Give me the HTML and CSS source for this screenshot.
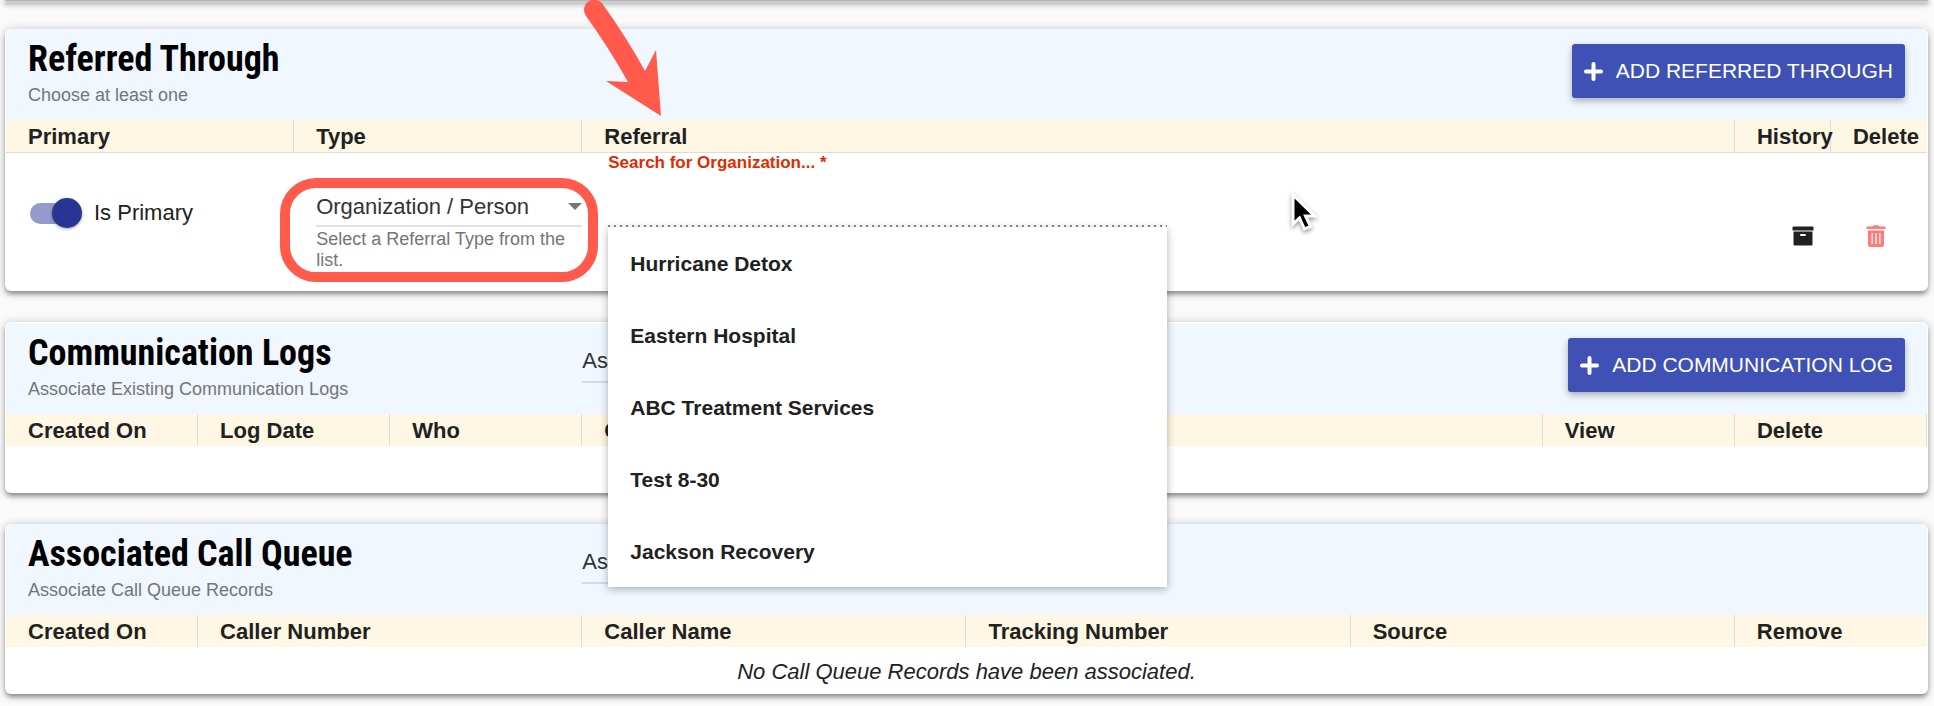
FILE: index.html
```html
<!DOCTYPE html>
<html lang="en">
<head>
  <meta charset="UTF-8" />
  <meta name="viewport" content="width=device-width, initial-scale=1" />
  <title>Referrals</title>
  <link rel="stylesheet" href="styles.css">
</head>
<body>
  <section class="card collapsed"></section>

  <section class="card">
    <header class="card-header">
      <div>
        <h2>Referred Through</h2>
        <p>Choose at least one</p>
      </div>
      <button type="button" class="add">
        <svg width="19" height="19" viewBox="0 0 19 19"><path d="M9.500 2v15M2 9.500h15" stroke="#fff" stroke-width="4" stroke-linecap="round" /></svg>
        ADD REFERRED THROUGH
      </button>
    </header>
    <table class="lined">
      <thead>
        <tr>
          <th class="w15">Primary</th>
          <th class="w15">Type</th>
          <th class="referral">Referral
            <svg class="arrow" width="84" height="118" viewBox="0 0 84 118"><path fill="#ff5a4b" d="M4 16C-2 7 7-4 17 1Q20 2 22 6Q45 38 63 71L74 50L79 116L24 81L46 82Q27 48 4 16Z" /></svg>
          </th>
          <th class="w5">History</th>
          <th class="w5">Delete</th>
        </tr>
      </thead>
      <tbody>
        <tr class="entry">
          <td class="primary">
            <label class="switch"><input type="checkbox" role="switch" checked><span class="track"></span>Is Primary</label>
          </td>
          <td class="type">
            <div class="select">
              <select aria-label="Referral Type" aria-describedby="type-hint">
                <option>Organization / Person</option>
              </select>
            </div>
            <p class="hint" id="type-hint">Select a Referral Type from the list.</p>
            <div class="highlight"></div>
          </td>
          <td class="search">
            <div class="autocomplete">
              <label for="organization">Search for Organization... *</label>
              <input type="text" id="organization">
              <ul class="options">
                <li>Hurricane Detox</li>
                <li>Eastern Hospital</li>
                <li>ABC Treatment Services</li>
                <li>Test 8-30</li>
                <li>Jackson Recovery</li>
              </ul>
            </div>
          </td>
          <td class="history">
            <button type="button" class="icon" aria-label="History">
              <svg width="22" height="20" viewBox="0 0 22 20" fill="#212121"><path d="M1.500.5h19a1 1 0 0 1 1 1V4.500H.5v-3a1 1 0 0 1 1-1z" /><path fill-rule="evenodd" d="M1.500 5.500h19v13a1 1 0 0 1-1 1h-17a1 1 0 0 1-1-1zM9 8a.7.7 0 0 0 0 2h4a.7.7 0 0 0 0-2z" /></svg>
            </button>
          </td>
          <td class="delete">
            <button type="button" class="icon" aria-label="Delete">
              <svg width="20" height="22" viewBox="0 0 20 22" fill="#ff7b7b"><path d="M1 1.500h5.500L7.500.3h5l1 1.200H19a.5.5 0 0 1 .5.500V4H.5V2a.5.5 0 0 1 .5-.5z" /><path fill-rule="evenodd" d="M2 5.500h16V20a2 2 0 0 1-2 2H4a2 2 0 0 1-2-2zM5.500 8v11h1.300V8zM9.400 8v11h1.300V8zM13.200 8v11h1.300V8z" /></svg>
            </button>
          </td>
        </tr>
      </tbody>
    </table>
  </section>

  <section class="card edged">
    <header class="card-header">
      <div>
        <h2>Communication Logs</h2>
        <p>Associate Existing Communication Logs</p>
      </div>
      <div class="select associate">
        <select aria-label="Associate Communication Log">
          <option>Associate Communication Log</option>
        </select>
      </div>
      <button type="button" class="add">
        <svg width="19" height="19" viewBox="0 0 19 19"><path d="M9.500 2v15M2 9.500h15" stroke="#fff" stroke-width="4" stroke-linecap="round" /></svg>
        ADD COMMUNICATION LOG
      </button>
    </header>
    <table class="closed">
      <thead>
        <tr>
          <th class="w10">Created On</th>
          <th class="w10">Log Date</th>
          <th class="w10">Who</th>
          <th>Comments</th>
          <th class="w10">View</th>
          <th class="w10">Delete</th>
        </tr>
      </thead>
      <tbody>
        <tr><td colspan="6" class="empty"></td></tr>
      </tbody>
    </table>
  </section>

  <section class="card">
    <header class="card-header">
      <div>
        <h2>Associated Call Queue</h2>
        <p>Associate Call Queue Records</p>
      </div>
      <div class="select associate">
        <select aria-label="Associate Call Queue Record">
          <option>Associate Call Queue Record</option>
        </select>
      </div>
    </header>
    <table>
      <thead>
        <tr>
          <th class="w10">Created On</th>
          <th class="w20">Caller Number</th>
          <th class="w20">Caller Name</th>
          <th class="w20">Tracking Number</th>
          <th class="w20">Source</th>
          <th class="w10">Remove</th>
        </tr>
      </thead>
      <tbody>
        <tr><td colspan="6" class="empty">No Call Queue Records have been associated.</td></tr>
      </tbody>
    </table>
  </section>

  <svg class="pointer" width="30" height="42" viewBox="0 0 30 42"><path d="M3 3V32L9.500 26L14.500 37L20.500 34.500L15.500 24H24.500Z" fill="#000" stroke="#fff" stroke-width="3" /></svg>
</body>
</html>
```

FILE: styles.css
```css
* {
  box-sizing: border-box;
}
body {
  position: relative;
  margin: 0;
  padding: 0 6px 12px 5px;
  background: #fafafa;
  color: #212121;
  font-family: "Liberation Sans", Arial, sans-serif;
  font-size: 22px;
}
h2, p, ul {
  margin: 0;
  padding: 0;
}

/* cards */
.card {
  margin-bottom: 31px;
  padding: 0 1px;
  background: #fff;
  border-radius: 6px;
  box-shadow: 0 1px 10px rgba(0,0,0,0.24), 0 4px 5px rgba(0,0,0,0.16), 0 4px 4px -2px rgba(0,0,0,0.24);
}
.card:last-of-type {
  margin-bottom: 0;
}
/* only the lower edge of this one shows */
.collapsed {
  height: 1px;
  margin-bottom: 28px;
  border-radius: 0;
  background: #b4b4b4;
  box-shadow: 0 0 10px rgba(0,0,0,0.3), 0 2px 5px 1px rgba(0,0,0,0.4);
}
.edged {
  padding-top: 1px;
}
.card-header {
  display: grid;
  grid-template-columns: 30% 1fr auto;
  align-items: start;
  height: 91px;
  background: #f0f7ff;
  border-radius: 6px 6px 0 0;
}
.card-header > div:first-child {
  padding: 10px 0 0 22px;
}
h2 {
  color: #000;
  font-family: "Roboto Condensed", Roboto, sans-serif;
  font-size: 36px;
  line-height: 40px;
  white-space: nowrap;
}
.card-header p {
  color: #757575;
  font-size: 18px;
  line-height: 32px;
}
.add {
  display: flex;
  grid-column: 3;
  align-items: center;
  gap: 13px;
  height: 54px;
  margin: 15px 22px 0 0;
  padding: 0 12px;
  border: 0;
  border-radius: 3px;
  background: #3f51b5;
  color: #fff;
  font: 21px "Liberation Sans", Arial, sans-serif;
  box-shadow: 0 3px 7px rgba(0,0,0,0.3);
}

/* tables */
table {
  width: 100%;
  table-layout: fixed;
  border-collapse: separate;
  border-spacing: 0;
}
th {
  height: 32px;
  padding: 2px 0 0 22px;
  border-right: 1px solid #dcdcdc;
  background: #fdf7e3;
  line-height: 30px;
  text-align: left;
  white-space: nowrap;
}
th:last-child {
  border-right: 0;
}
.closed th:last-child {
  border-right: 1px solid #dcdcdc;
}
.lined th {
  height: 33px;
  border-bottom: 1px solid #dcdcdc;
}
.w5 { width: 5%; }
.w10 { width: 10%; }
.w15 { width: 15%; }
.w20 { width: 20%; }
td {
  padding: 0;
}
.entry td {
  position: relative;
  height: 138px;
  vertical-align: top;
}
.empty {
  height: 47px;
  padding-top: 2px;
  font-style: italic;
  text-align: center;
}

/* is primary switch */
.entry .primary {
  padding: 45px 0 0 24px;
}
.switch {
  display: flex;
  align-items: center;
  height: 30px;
}
.switch input {
  position: absolute;
  opacity: 0;
}
.track {
  position: relative;
  width: 44px;
  height: 21px;
  margin-right: 20px;
  border-radius: 11px;
  background: #949aca;
}
.track::after {
  content: "";
  position: absolute;
  top: -5px;
  right: -8px;
  width: 30px;
  height: 30px;
  border-radius: 50%;
  background: #283593;
  box-shadow: 0 1px 3px rgba(0,0,0,0.4);
}

/* selects */
.entry .type {
  padding: 36px 0 0 22px;
}
.select {
  position: relative;
  border-bottom: 2px solid #e1e1e1;
}
.select::after {
  content: "";
  position: absolute;
  top: 14px;
  right: 0;
  border: 7px solid transparent;
  border-top-color: #757575;
  border-bottom-width: 0;
}
.select select {
  display: block;
  width: 100%;
  height: 36px;
  padding: 0 0 2px;
  border: 0;
  appearance: none;
  background: none;
  color: #333;
  font: 22px "Liberation Sans", Arial, sans-serif;
}
.associate {
  width: 400px;
  margin-top: 22px;
  border-bottom-color: #d5dbe1;
}
.associate select {
  padding-bottom: 5px;
}
.hint {
  padding-top: 2px;
  color: #757575;
  font-size: 18px;
  line-height: 21px;
}
.highlight {
  position: absolute;
  top: 25px;
  right: -16px;
  left: -14px;
  height: 104px;
  border: 10px solid #ff5a4b;
  border-radius: 36px;
  pointer-events: none;
  z-index: 1;
}

/* organization search */
.entry .search {
  padding-left: 26px;
}
.autocomplete {
  position: relative;
  width: 559px;
}
.autocomplete label {
  display: block;
  color: #dd2c00;
  font-size: 17px;
  font-weight: bold;
  line-height: 20px;
}
.autocomplete input {
  display: block;
  width: 100%;
  height: 54px;
  border: 0;
  outline: 0;
  background: repeating-linear-gradient(90deg, #888 0 2px, #fff 2px 6px) bottom / 100% 2px no-repeat;
  font-size: 22px;
}
.options {
  position: absolute;
  top: 100%;
  left: 0;
  width: 100%;
  background: #fff;
  box-shadow: 0 2px 8px rgba(0,0,0,0.3);
  list-style: none;
  z-index: 2;
}
.options li {
  height: 72px;
  padding: 2px 0 0 22px;
  font-size: 21px;
  font-weight: bold;
  line-height: 70px;
}

/* row actions */
.icon {
  display: flex;
  align-items: center;
  justify-content: center;
  width: 44px;
  height: 44px;
  padding: 0;
  border: 0;
  background: none;
}
.entry .history {
  padding: 61px 0 0 46px;
}
.entry .delete {
  padding: 61px 0 0 23px;
}

/* pointers drawn over the page */
.referral {
  position: relative;
}
.arrow {
  position: absolute;
  bottom: 34px;
  left: 0;
}
.pointer {
  position: absolute;
  top: 192px;
  left: 1290px;
  filter: drop-shadow(0 2px 2px rgba(0,0,0,0.4));
}
```
